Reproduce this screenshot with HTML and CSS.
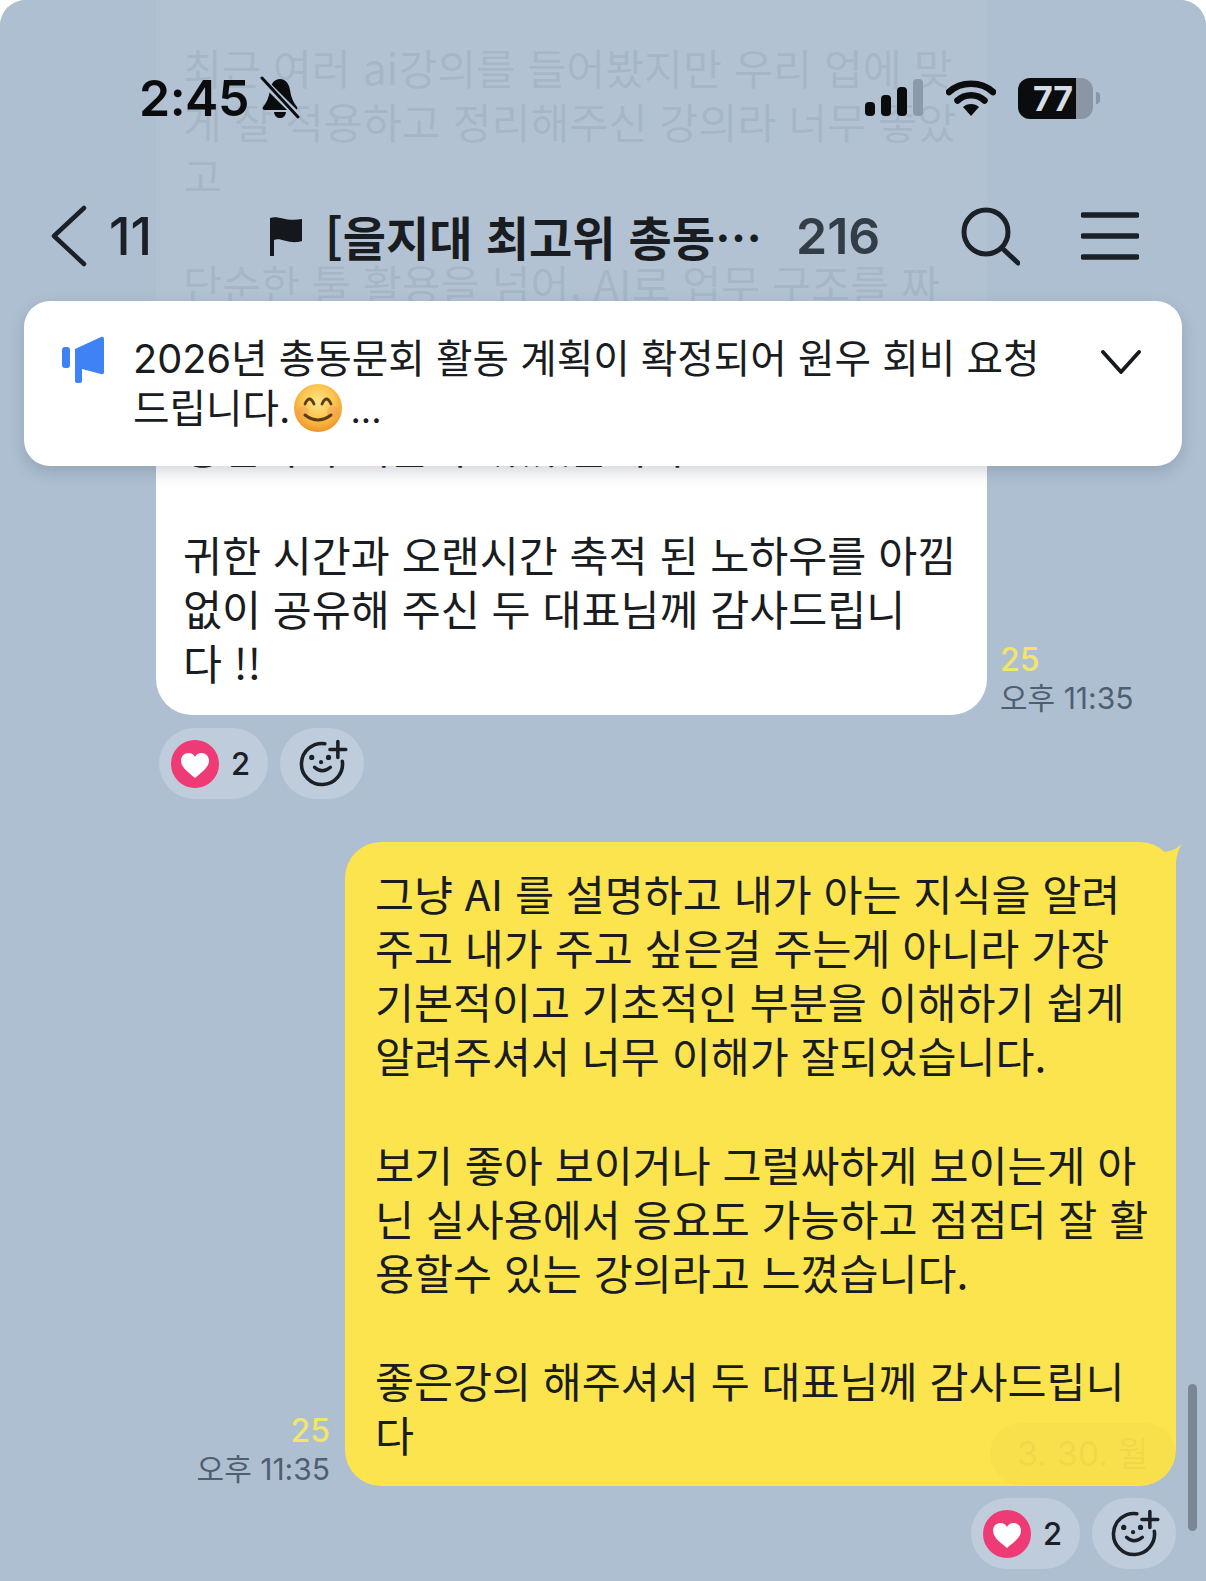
FILE: index.html
```html
<!DOCTYPE html>
<html lang="ko">
<head>
<meta charset="utf-8">
<title>[을지대 최고위 총동문회]</title>
<link rel="stylesheet" href="styles.css">
</head>
<body>
<div class="screen">
  <main class="chat">
    <section class="msg msg-in">
      <div class="bubble bubble-white">최근 여러 ai강의를 들어봤지만 우리 업에 맞<br>게 잘 적용하고 정리해주신 강의라 너무 좋았<br>고<br>&nbsp;<br>단순한 툴 활용을 넘어, AI로 업무 구조를 짜<br>&nbsp;<br>&nbsp;<br>방법까지 배울 수 있었습니다<br>&nbsp;<br>귀한 시간과 오랜시간 축적 된 노하우를 아낌<br>없이 공유해 주신 두 대표님께 감사드립니<br>다 !!</div>
      <div class="meta">
        <span class="unread">25</span>
        <span class="time">오후 11:35</span>
      </div>
    </section>
    <div class="reactions reactions-in">
      <div class="pill pill-heart">
        <svg class="heart" viewBox="0 0 48 48"><circle cx="24" cy="24" r="24" fill="#ee3a75"/><path d="M24 38C17 32 10 27.500 10 20.500C10 16 13.500 13 17.500 13C20.500 13 22.800 14.500 24 17C25.200 14.500 27.500 13 30.500 13C34.500 13 38 16 38 20.500C38 27.500 31 32 24 38Z" fill="#fff"/></svg>
        <span class="count">2</span>
      </div>
      <div class="pill pill-add">
        <svg class="add" viewBox="0 0 60 60"><path d="M33 8.200A22 22 0 1 0 51.800 27" fill="none" stroke="#1b2027" stroke-width="3.800" stroke-linecap="round"/><path d="M47 6v17M38.500 14.500h17" fill="none" stroke="#1b2027" stroke-width="3.800" stroke-linecap="round"/><circle cx="19" cy="23" r="2.800" fill="#1b2027"/><circle cx="37" cy="23" r="2.800" fill="#1b2027"/><circle cx="29" cy="28" r="2.200" fill="#1b2027"/><path d="M22 33.500Q30 41 39 33.500" fill="none" stroke="#1b2027" stroke-width="3.600" stroke-linecap="round"/></svg>
      </div>
    </div>

    <section class="msg msg-out">
      <div class="meta meta-out">
        <span class="unread">25</span>
        <span class="time">오후 11:35</span>
      </div>
      <div class="bubble bubble-yellow">그냥 AI 를 설명하고 내가 아는 지식을 알려<br>주고 내가 주고 싶은걸 주는게 아니라 가장<br>기본적이고 기초적인 부분을 이해하기 쉽게<br>알려주셔서 너무 이해가 잘되었습니다.<br>&nbsp;<br>보기 좋아 보이거나 그럴싸하게 보이는게 아<br>닌 실사용에서 응요도 가능하고 점점더 잘 활<br>용할수 있는 강의라고 느꼈습니다.<br>&nbsp;<br>좋은강의 해주셔서 두 대표님께 감사드립니<br>다<svg class="tail" viewBox="0 0 52 38"><path d="M0 0H7Q20 2 30 10Q42 11 52 2Q47 9 46 20V38H0Z" fill="#fbe44d"/></svg></div>
    </section>
    <div class="reactions reactions-out">
      <div class="pill pill-heart">
        <svg class="heart" viewBox="0 0 48 48"><circle cx="24" cy="24" r="24" fill="#ee3a75"/><path d="M24 38C17 32 10 27.500 10 20.500C10 16 13.500 13 17.500 13C20.500 13 22.800 14.500 24 17C25.200 14.500 27.500 13 30.500 13C34.500 13 38 16 38 20.500C38 27.500 31 32 24 38Z" fill="#fff"/></svg>
        <span class="count">2</span>
      </div>
      <div class="pill pill-add">
        <svg class="add" viewBox="0 0 60 60"><path d="M33 8.200A22 22 0 1 0 51.800 27" fill="none" stroke="#1b2027" stroke-width="3.800" stroke-linecap="round"/><path d="M47 6v17M38.500 14.500h17" fill="none" stroke="#1b2027" stroke-width="3.800" stroke-linecap="round"/><circle cx="19" cy="23" r="2.800" fill="#1b2027"/><circle cx="37" cy="23" r="2.800" fill="#1b2027"/><circle cx="29" cy="28" r="2.200" fill="#1b2027"/><path d="M22 33.500Q30 41 39 33.500" fill="none" stroke="#1b2027" stroke-width="3.600" stroke-linecap="round"/></svg>
      </div>
    </div>
  </main>

  <header class="topbar">
    <div class="status">
      <div class="status-left">
        <span class="clock">2:45</span>
        <svg class="bell" viewBox="0 0 40 44"><path d="M20 3C26 3 29 8 30 14C31 21 33 26 37 31C38 33 37 34 35 34H5C3 34 2 33 3 31C7 26 9 21 10 14C11 8 14 3 20 3Z" fill="#0b0c0e"/><path d="M14 36H26C25.500 40 23 42 20 42C17 42 14.500 40 14 36Z" fill="#0b0c0e"/><path d="M1 3L40 42" stroke="#b1c2d5" stroke-width="7"/><path d="M2 2L38 41" stroke="#0b0c0e" stroke-width="3" stroke-linecap="round"/></svg>
      </div>
      <div class="status-right">
        <svg class="signal" viewBox="0 0 58 38"><rect x="0" y="23" width="10" height="14" rx="4" fill="#0b0c0e"/><rect x="16" y="16" width="10" height="21" rx="4" fill="#0b0c0e"/><rect x="32" y="8" width="10" height="29" rx="4" fill="#0b0c0e"/><rect x="48" y="0" width="10" height="37" rx="4" fill="#8c99a8"/></svg>
        <svg class="wifi" viewBox="0 0 50 38"><path d="M3 13C15 2 35 2 47 13" fill="none" stroke="#0b0c0e" stroke-width="6.500" stroke-linecap="round"/><path d="M11.500 21.500C19 14.500 31 14.500 38.500 21.500" fill="none" stroke="#0b0c0e" stroke-width="6.500" stroke-linecap="round"/><path d="M17 28C21 24 29 24 33 28L25 37Z" fill="#0b0c0e"/></svg>
        <div class="battery">
          <div class="battery-body"><span class="battery-level">77</span></div>
          <span class="battery-nub"></span>
        </div>
      </div>
    </div>
    <nav class="nav">
      <svg class="back" viewBox="0 0 36 62"><path d="M33 3L3 31L33 59" fill="none" stroke="#1b2027" stroke-width="4.500" stroke-linecap="round" stroke-linejoin="round"/></svg>
      <span class="back-count">11</span>
      <svg class="flag" viewBox="0 0 34 40"><path d="M1 2C10 -1 16 6 33 3V25C20 29 12 21 5 24V40H1Z" fill="#14171b"/></svg>
      <span class="title">[을지대 최고위 총동…</span>
      <span class="members">216</span>
      <svg class="search" viewBox="0 0 60 60"><circle cx="26" cy="26" r="22" fill="none" stroke="#1b2027" stroke-width="5"/><path d="M42 42L58 57" fill="none" stroke="#1b2027" stroke-width="5" stroke-linecap="round"/></svg>
      <svg class="menu" viewBox="0 0 58 48"><path d="M2 3H56M2 24H56M2 45H56" fill="none" stroke="#1b2027" stroke-width="5.500" stroke-linecap="round"/></svg>
    </nav>
  </header>

  <aside class="notice">
    <svg class="megaphone" viewBox="0 0 42 48"><rect x="0" y="11" width="8" height="21" rx="3" fill="#3e82f6"/><path d="M13 13L39 1Q42 0 42 3V36Q42 39 39 38L20 33V45Q20 47 18 47H15Q13 47 13 45Z" fill="#3e82f6"/></svg>
    <p class="notice-text">2026년 총동문회 활동 계획이 확정되어 원우 회비 요청<br>드립니다.<svg class="emoji" viewBox="0 0 48 48"><defs><radialGradient id="face" cx="50%" cy="38%" r="62%"><stop offset="0%" stop-color="#fde58a"/><stop offset="55%" stop-color="#fbc64f"/><stop offset="100%" stop-color="#ee9528"/></radialGradient></defs><circle cx="24" cy="24" r="24" fill="url(#face)"/><circle cx="9" cy="28" r="6" fill="#f59a5a" opacity=".45"/><circle cx="39" cy="28" r="6" fill="#f59a5a" opacity=".45"/><path d="M11 20Q15.500 10 20 20M28 20Q32.500 10 37 20" fill="none" stroke="#5d3a16" stroke-width="2.800" stroke-linecap="round"/><path d="M11 31Q24 41 37 31" fill="none" stroke="#5d3a16" stroke-width="3" stroke-linecap="round"/></svg><span class="ellipsis">...</span></p>
    <svg class="chevron" viewBox="0 0 40 24"><path d="M2 2L20 22L38 2" fill="none" stroke="#16191d" stroke-width="3.800" stroke-linecap="round" stroke-linejoin="round"/></svg>
  </aside>

  <div class="date-pill">3. 30. 월</div>
  <div class="scrollbar"></div>
</div>
</body>
</html>
```

FILE: styles.css
```css
* { box-sizing: border-box; }
html, body { margin: 0; padding: 0; background: #fff; }
body { width: 1206px; height: 1581px; overflow: hidden; font-family: Inter, "Noto Sans CJK KR", sans-serif; color: #191c20; }

.screen { position: relative; width: 1206px; height: 1581px; overflow: hidden; background: #aebfd1; border-radius: 26px 26px 0 0; }

.chat { display: flex; flex-direction: column; }
.msg { display: flex; align-items: flex-end; }
.msg-in { padding-left: 156px; gap: 13px; }
.msg-out { margin-top: 43px; padding-left: 195px; gap: 15px; justify-content: flex-end; padding-right: 30px; }

.bubble { font-family: "Noto Sans CJK KR", sans-serif; font-size: 42.4px; line-height: 54.1px; white-space: nowrap; position: relative; letter-spacing: 0; }
.bubble-white { width: 831px; background: #fff; padding: 40px 10px 26px 27px; border-radius: 0 0 36px 36px; }
.bubble-yellow { width: 831px; background: #fbe44d; padding: 24px 10px 25px 30px; border-radius: 36px; }
.tail { position: absolute; top: 0; right: -6px; width: 52px; height: 38px; }

.meta { display: flex; flex-direction: column; margin-bottom: -2px; }
.meta-out { align-items: flex-end; }
.unread { color: #f1e66a; font-size: 32px; line-height: 38px; font-weight: 500; }
.time { color: #4f5f71; font-size: 30px; line-height: 38px; white-space: nowrap; }

.reactions { display: flex; gap: 12px; }
.reactions-in { padding-left: 159px; margin-top: 13px; }
.reactions-out { justify-content: flex-end; padding-right: 30px; margin-top: 12px; }
.pill { display: flex; align-items: center; height: 71px; border-radius: 36px; background: #bfccdb; }
.pill-heart { width: 109px; padding-left: 12px; gap: 12px; }
.pill-add { width: 84px; justify-content: center; }
.heart { width: 48px; height: 48px; flex: none; }
.count { font-size: 31px; font-weight: 500; color: #1b2027; }
.add { width: 56px; height: 56px; }

.topbar { position: absolute; top: 0; left: 0; width: 100%; height: 301px; background: rgba(174, 191, 209, .95); }
.status { display: flex; justify-content: space-between; align-items: center; padding: 76px 106px 0 139px; height: 120px; }
.status-left { display: flex; align-items: center; gap: 11px; }
.clock { font-size: 50px; line-height: 44px; font-weight: 600; color: #0b0c0e; letter-spacing: -.5px; }
.bell { width: 40px; height: 44px; }
.status-right { display: flex; align-items: center; }
.signal { width: 58px; height: 38px; }
.wifi { width: 50px; height: 38px; margin-left: 23px; }
.battery { display: flex; align-items: center; margin-left: 22px; }
.battery-body { width: 75px; height: 41px; border-radius: 12px; overflow: hidden; background: linear-gradient(90deg, #0b0c0e 77%, #8a96a4 77%); }
.battery-level { display: block; width: 70px; text-align: center; font-size: 34px; line-height: 41px; font-weight: 700; color: #d5dde6; }
.battery-nub { width: 4px; height: 12px; margin-left: 3px; border-radius: 0 4px 4px 0; background: #8a96a4; }

.nav { display: flex; align-items: center; height: 62px; margin-top: 85px; padding-left: 51px; }
.back { width: 36px; height: 62px; flex: none; }
.back-count { margin-left: 22px; font-size: 52px; font-weight: 500; color: #1b2027; width: 160px; }
.flag { width: 34px; height: 40px; margin-left: 0; flex: none; }
.title { margin-left: 22px; width: 471px; font-family: "Noto Sans CJK KR", sans-serif; font-size: 47px; font-weight: 700; color: #191c20; white-space: nowrap; line-height: 62px; }
.members { font-size: 50px; font-weight: 600; color: #333d48; width: 164px; }
.search { width: 60px; height: 60px; flex: none; }
.menu { width: 58px; height: 48px; margin-left: 61px; flex: none; }

.notice { position: absolute; top: 301px; left: 24px; width: 1158px; height: 165px; display: flex; align-items: flex-start; padding: 35px 41px 0 38px; border-radius: 26px; background: #fff; box-shadow: 0 6px 16px rgba(60, 75, 95, .22); }
.megaphone { width: 42px; height: 48px; flex: none; }
.notice-text { margin: -1px 0 0 29px; width: 969px; font-family: Inter, "Noto Sans CJK KR", sans-serif; font-size: 39.7px; line-height: 49px; color: #191c20; white-space: nowrap; }
.emoji { width: 48px; height: 48px; vertical-align: -9px; margin-left: 4px; }
.ellipsis { margin-left: 8px; font-size: 36px; }
.chevron { width: 40px; height: 24px; margin: 14px 0 0 0; flex: none; }

.date-pill { position: absolute; top: 1423px; left: 990px; width: 186px; height: 62px; border-radius: 31px; background: rgba(90, 90, 60, .025); text-align: center; font-family: Inter, "Noto Sans CJK KR", sans-serif; font-size: 34px; line-height: 62px; color: rgba(120, 110, 40, .08); }
.scrollbar { position: absolute; top: 1384px; left: 1188px; width: 9px; height: 147px; border-radius: 5px; background: #7a8797; }
```
